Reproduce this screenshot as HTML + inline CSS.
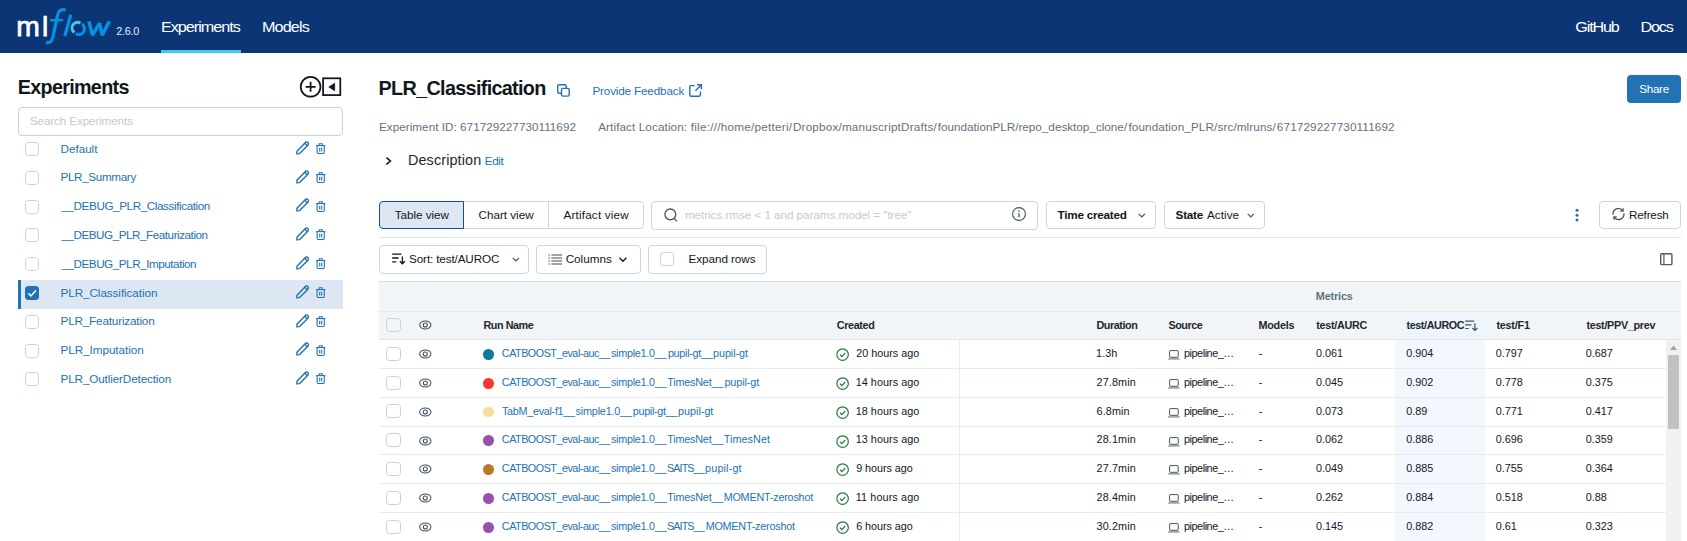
<!DOCTYPE html>
<html><head><meta charset="utf-8"><title>MLflow</title>
<style>
html,body{margin:0;padding:0;background:#fff;}
body{width:1687px;height:541px;overflow:hidden;position:relative;font-family:"Liberation Sans",sans-serif;}
.t{position:absolute;white-space:pre;line-height:1;}
.b{position:absolute;box-sizing:border-box;}
svg{position:absolute;overflow:visible;}
</style></head><body>
<header>
<div class="b" style="left:0.00px;top:0.00px;width:1687.00px;height:53.00px;background:#0b3574"></div>
<div class="b" style="left:161.00px;top:50.00px;width:80.20px;height:3.00px;background:#43c9ed"></div>
<span class="t" style="left:16.3px;top:11.65px;font-size:28.3px;color:#fff;letter-spacing:2.1px;-webkit-text-stroke:0.75px #fff">ml</span>
<svg style="left:0.00px;top:0.00px" width="160" height="53" viewBox="0 0 160 53"><g fill="none" stroke="#0194e2" stroke-width="3.25"><path d="M65.6 10.1 C61.2 8.6 58.6 10.6 57.6 15 L52.9 37 C52 41 50 43.6 46 42.4"/><path d="M50.3 20.2 L63.3 20.2" stroke-width="2.4"/><path d="M70.8 14.7 L64.8 36"/><path d="M89 21.3 L92.4 35.2 L99.6 23.4 L102.2 35.2 L109.4 21.3" stroke-linejoin="bevel" stroke-width="3.5"/><path d="M82 24 A5.3 5.5 0 0 1 75.8 33.6" stroke-width="3"/><path d="M74.4 32.4 A5.3 5.5 0 0 1 80.4 23.3" stroke="#43c9ed" stroke-width="3"/></g></svg>
<span class="t" style="left:116.19px;top:25.00px;font-size:10.8px;line-height:12px;letter-spacing:-0.240px;color:#e7f1fb">2.6.0</span>
<span class="t" style="left:161.00px;top:17.00px;font-size:16.2px;line-height:18px;letter-spacing:-1.022px;color:#ffffff;transform:scaleY(0.94);transform-origin:0 15px">Experiments</span>
<span class="t" style="left:262.02px;top:17.00px;font-size:16.2px;line-height:18px;letter-spacing:-0.891px;color:#ffffff;transform:scaleY(0.94);transform-origin:0 15px">Models</span>
<span class="t" style="left:1575.36px;top:17.00px;font-size:16.2px;line-height:18px;letter-spacing:-1.208px;color:#ffffff;transform:scaleY(0.94);transform-origin:0 15px">GitHub</span>
<span class="t" style="left:1640.59px;top:17.00px;font-size:16.2px;line-height:18px;letter-spacing:-1.244px;color:#ffffff;transform:scaleY(0.94);transform-origin:0 15px">Docs</span>
</header>
<aside>
<svg style="left:298.00px;top:74.00px" width="48" height="26" viewBox="0 0 48 26"><g fill="none" stroke="#11171c" stroke-width="1.75"><circle cx="12.6" cy="12.8" r="9.9"/><path d="M7.6 12.8 H17.6 M12.6 7.8 V17.8"/><rect x="25.1" y="4.3" width="17.2" height="16.8"/></g><path d="M30.6 12.9 L36.8 8.9 V16.9 Z" fill="#11171c" stroke="#11171c" stroke-width="0.4" stroke-linejoin="round"/></svg>
<div class="b" style="left:18.00px;top:107.00px;width:325.00px;height:29.00px;border:1px solid #c4d3e0;border-radius:4px"></div>
<div class="b" style="left:25.00px;top:142.00px;width:14.00px;height:14.00px;border:1px solid #c4d3e0;border-radius:3.5px;background:#fff"></div>
<svg style="left:295.80px;top:140.70px" width="14" height="14" viewBox="0 0 14 14"><g fill="none" stroke="#2272b4" stroke-width="1.45" stroke-linejoin="round"><path d="M1 10.2 L9.4 1.4 A1.9 1.9 0 0 1 12.1 4 L3.6 12.6 L0.9 12.9 Z"/><path d="M8.7 2.2 L11.3 4.8"/></g></svg>
<svg style="left:316.40px;top:142.90px" width="10" height="11" viewBox="0 0 10 11"><g fill="none" stroke="#2272b4" stroke-width="1.1"><path d="M0 2.6 H9.4"/><path d="M3.2 2.4 V0.8 H6.2 V2.4"/><path d="M1.1 2.8 V9.3 A1.2 1.2 0 0 0 2.3 10.5 H7.1 A1.2 1.2 0 0 0 8.3 9.3 V2.8"/><path d="M3.7 4.7 V8.4 M5.7 4.7 V8.4" stroke-width="1.1"/></g></svg>
<div class="b" style="left:25.00px;top:170.80px;width:14.00px;height:14.00px;border:1px solid #c4d3e0;border-radius:3.5px;background:#fff"></div>
<svg style="left:295.80px;top:169.50px" width="14" height="14" viewBox="0 0 14 14"><g fill="none" stroke="#2272b4" stroke-width="1.45" stroke-linejoin="round"><path d="M1 10.2 L9.4 1.4 A1.9 1.9 0 0 1 12.1 4 L3.6 12.6 L0.9 12.9 Z"/><path d="M8.7 2.2 L11.3 4.8"/></g></svg>
<svg style="left:316.40px;top:171.70px" width="10" height="11" viewBox="0 0 10 11"><g fill="none" stroke="#2272b4" stroke-width="1.1"><path d="M0 2.6 H9.4"/><path d="M3.2 2.4 V0.8 H6.2 V2.4"/><path d="M1.1 2.8 V9.3 A1.2 1.2 0 0 0 2.3 10.5 H7.1 A1.2 1.2 0 0 0 8.3 9.3 V2.8"/><path d="M3.7 4.7 V8.4 M5.7 4.7 V8.4" stroke-width="1.1"/></g></svg>
<div class="b" style="left:25.00px;top:199.60px;width:14.00px;height:14.00px;border:1px solid #c4d3e0;border-radius:3.5px;background:#fff"></div>
<svg style="left:295.80px;top:198.30px" width="14" height="14" viewBox="0 0 14 14"><g fill="none" stroke="#2272b4" stroke-width="1.45" stroke-linejoin="round"><path d="M1 10.2 L9.4 1.4 A1.9 1.9 0 0 1 12.1 4 L3.6 12.6 L0.9 12.9 Z"/><path d="M8.7 2.2 L11.3 4.8"/></g></svg>
<svg style="left:316.40px;top:200.50px" width="10" height="11" viewBox="0 0 10 11"><g fill="none" stroke="#2272b4" stroke-width="1.1"><path d="M0 2.6 H9.4"/><path d="M3.2 2.4 V0.8 H6.2 V2.4"/><path d="M1.1 2.8 V9.3 A1.2 1.2 0 0 0 2.3 10.5 H7.1 A1.2 1.2 0 0 0 8.3 9.3 V2.8"/><path d="M3.7 4.7 V8.4 M5.7 4.7 V8.4" stroke-width="1.1"/></g></svg>
<div class="b" style="left:25.00px;top:228.40px;width:14.00px;height:14.00px;border:1px solid #c4d3e0;border-radius:3.5px;background:#fff"></div>
<svg style="left:295.80px;top:227.10px" width="14" height="14" viewBox="0 0 14 14"><g fill="none" stroke="#2272b4" stroke-width="1.45" stroke-linejoin="round"><path d="M1 10.2 L9.4 1.4 A1.9 1.9 0 0 1 12.1 4 L3.6 12.6 L0.9 12.9 Z"/><path d="M8.7 2.2 L11.3 4.8"/></g></svg>
<svg style="left:316.40px;top:229.30px" width="10" height="11" viewBox="0 0 10 11"><g fill="none" stroke="#2272b4" stroke-width="1.1"><path d="M0 2.6 H9.4"/><path d="M3.2 2.4 V0.8 H6.2 V2.4"/><path d="M1.1 2.8 V9.3 A1.2 1.2 0 0 0 2.3 10.5 H7.1 A1.2 1.2 0 0 0 8.3 9.3 V2.8"/><path d="M3.7 4.7 V8.4 M5.7 4.7 V8.4" stroke-width="1.1"/></g></svg>
<div class="b" style="left:25.00px;top:257.20px;width:14.00px;height:14.00px;border:1px solid #c4d3e0;border-radius:3.5px;background:#fff"></div>
<svg style="left:295.80px;top:255.90px" width="14" height="14" viewBox="0 0 14 14"><g fill="none" stroke="#2272b4" stroke-width="1.45" stroke-linejoin="round"><path d="M1 10.2 L9.4 1.4 A1.9 1.9 0 0 1 12.1 4 L3.6 12.6 L0.9 12.9 Z"/><path d="M8.7 2.2 L11.3 4.8"/></g></svg>
<svg style="left:316.40px;top:258.10px" width="10" height="11" viewBox="0 0 10 11"><g fill="none" stroke="#2272b4" stroke-width="1.1"><path d="M0 2.6 H9.4"/><path d="M3.2 2.4 V0.8 H6.2 V2.4"/><path d="M1.1 2.8 V9.3 A1.2 1.2 0 0 0 2.3 10.5 H7.1 A1.2 1.2 0 0 0 8.3 9.3 V2.8"/><path d="M3.7 4.7 V8.4 M5.7 4.7 V8.4" stroke-width="1.1"/></g></svg>
<div class="b" style="left:18.00px;top:280.00px;width:325.00px;height:29.00px;background:#dce7f3;border-left:3px solid #2272b4"></div>
<div class="b" style="left:25.00px;top:285.80px;width:14.20px;height:14.20px;background:#2272b4;border-radius:3.5px"></div>
<svg style="left:25.00px;top:285.80px" width="14.2" height="14.2" viewBox="0 0 14.2 14.2"><path d="M3.4 7.4 L6 10 L10.9 4.6" fill="none" stroke="#fff" stroke-width="1.5"/></svg>
<svg style="left:295.80px;top:284.70px" width="14" height="14" viewBox="0 0 14 14"><g fill="none" stroke="#2272b4" stroke-width="1.45" stroke-linejoin="round"><path d="M1 10.2 L9.4 1.4 A1.9 1.9 0 0 1 12.1 4 L3.6 12.6 L0.9 12.9 Z"/><path d="M8.7 2.2 L11.3 4.8"/></g></svg>
<svg style="left:316.40px;top:286.90px" width="10" height="11" viewBox="0 0 10 11"><g fill="none" stroke="#2272b4" stroke-width="1.1"><path d="M0 2.6 H9.4"/><path d="M3.2 2.4 V0.8 H6.2 V2.4"/><path d="M1.1 2.8 V9.3 A1.2 1.2 0 0 0 2.3 10.5 H7.1 A1.2 1.2 0 0 0 8.3 9.3 V2.8"/><path d="M3.7 4.7 V8.4 M5.7 4.7 V8.4" stroke-width="1.1"/></g></svg>
<div class="b" style="left:25.00px;top:314.80px;width:14.00px;height:14.00px;border:1px solid #c4d3e0;border-radius:3.5px;background:#fff"></div>
<svg style="left:295.80px;top:313.50px" width="14" height="14" viewBox="0 0 14 14"><g fill="none" stroke="#2272b4" stroke-width="1.45" stroke-linejoin="round"><path d="M1 10.2 L9.4 1.4 A1.9 1.9 0 0 1 12.1 4 L3.6 12.6 L0.9 12.9 Z"/><path d="M8.7 2.2 L11.3 4.8"/></g></svg>
<svg style="left:316.40px;top:315.70px" width="10" height="11" viewBox="0 0 10 11"><g fill="none" stroke="#2272b4" stroke-width="1.1"><path d="M0 2.6 H9.4"/><path d="M3.2 2.4 V0.8 H6.2 V2.4"/><path d="M1.1 2.8 V9.3 A1.2 1.2 0 0 0 2.3 10.5 H7.1 A1.2 1.2 0 0 0 8.3 9.3 V2.8"/><path d="M3.7 4.7 V8.4 M5.7 4.7 V8.4" stroke-width="1.1"/></g></svg>
<div class="b" style="left:25.00px;top:343.60px;width:14.00px;height:14.00px;border:1px solid #c4d3e0;border-radius:3.5px;background:#fff"></div>
<svg style="left:295.80px;top:342.30px" width="14" height="14" viewBox="0 0 14 14"><g fill="none" stroke="#2272b4" stroke-width="1.45" stroke-linejoin="round"><path d="M1 10.2 L9.4 1.4 A1.9 1.9 0 0 1 12.1 4 L3.6 12.6 L0.9 12.9 Z"/><path d="M8.7 2.2 L11.3 4.8"/></g></svg>
<svg style="left:316.40px;top:344.50px" width="10" height="11" viewBox="0 0 10 11"><g fill="none" stroke="#2272b4" stroke-width="1.1"><path d="M0 2.6 H9.4"/><path d="M3.2 2.4 V0.8 H6.2 V2.4"/><path d="M1.1 2.8 V9.3 A1.2 1.2 0 0 0 2.3 10.5 H7.1 A1.2 1.2 0 0 0 8.3 9.3 V2.8"/><path d="M3.7 4.7 V8.4 M5.7 4.7 V8.4" stroke-width="1.1"/></g></svg>
<div class="b" style="left:25.00px;top:372.40px;width:14.00px;height:14.00px;border:1px solid #c4d3e0;border-radius:3.5px;background:#fff"></div>
<svg style="left:295.80px;top:371.10px" width="14" height="14" viewBox="0 0 14 14"><g fill="none" stroke="#2272b4" stroke-width="1.45" stroke-linejoin="round"><path d="M1 10.2 L9.4 1.4 A1.9 1.9 0 0 1 12.1 4 L3.6 12.6 L0.9 12.9 Z"/><path d="M8.7 2.2 L11.3 4.8"/></g></svg>
<svg style="left:316.40px;top:373.30px" width="10" height="11" viewBox="0 0 10 11"><g fill="none" stroke="#2272b4" stroke-width="1.1"><path d="M0 2.6 H9.4"/><path d="M3.2 2.4 V0.8 H6.2 V2.4"/><path d="M1.1 2.8 V9.3 A1.2 1.2 0 0 0 2.3 10.5 H7.1 A1.2 1.2 0 0 0 8.3 9.3 V2.8"/><path d="M3.7 4.7 V8.4 M5.7 4.7 V8.4" stroke-width="1.1"/></g></svg>
<span class="t" style="left:17.72px;top:76.00px;font-size:19.8px;line-height:22px;letter-spacing:-0.703px;color:#11171c;font-weight:700">Experiments</span>
<span class="t" style="left:29.90px;top:114.00px;font-size:11.7px;line-height:13px;letter-spacing:-0.129px;color:#c9c9c9">Search Experiments</span>
<span class="t" style="left:60.54px;top:142.00px;font-size:11.7px;line-height:13px;letter-spacing:-0.020px;color:#2272b4">Default</span>
<span class="t" style="left:60.54px;top:170.00px;font-size:11.7px;line-height:13px;letter-spacing:-0.353px;color:#2272b4">PLR_Summary</span>
<span class="t" style="left:61.41px;top:199.00px;font-size:11.7px;line-height:13px;letter-spacing:-0.408px;color:#2272b4">__DEBUG_PLR_Classification</span>
<span class="t" style="left:61.41px;top:228.00px;font-size:11.7px;line-height:13px;letter-spacing:-0.468px;color:#2272b4">__DEBUG_PLR_Featurization</span>
<span class="t" style="left:61.41px;top:257.00px;font-size:11.7px;line-height:13px;letter-spacing:-0.461px;color:#2272b4">__DEBUG_PLR_Imputation</span>
<span class="t" style="left:60.54px;top:286.00px;font-size:11.7px;line-height:13px;letter-spacing:-0.070px;color:#2272b4">PLR_Classification</span>
<span class="t" style="left:60.54px;top:314.00px;font-size:11.7px;line-height:13px;letter-spacing:-0.165px;color:#2272b4">PLR_Featurization</span>
<span class="t" style="left:60.54px;top:343.00px;font-size:11.7px;line-height:13px;letter-spacing:-0.053px;color:#2272b4">PLR_Imputation</span>
<span class="t" style="left:60.54px;top:372.00px;font-size:11.7px;line-height:13px;letter-spacing:-0.125px;color:#2272b4">PLR_OutlierDetection</span>
</aside>
<main>
<svg style="left:556.70px;top:83.70px" width="14" height="14" viewBox="0 0 14 14"><g fill="none" stroke="#2272b4" stroke-width="1.4"><rect x="0.7" y="0.7" width="8.5" height="8.5" rx="1.4"/><rect x="4.5" y="4.4" width="7.7" height="7.7" rx="1.4" fill="#fff"/></g></svg>
<svg style="left:688.70px;top:83.80px" width="14" height="14" viewBox="0 0 14 14"><g fill="none" stroke="#2272b4" stroke-width="1.4"><path d="M5.6 1.6 H2 A1.2 1.2 0 0 0 0.8 2.8 V11 A1.2 1.2 0 0 0 2 12.2 H10.2 A1.2 1.2 0 0 0 11.4 11 V7.4"/><path d="M8 0.8 H12.4 V5.2 M12.2 1 L6.4 6.8"/></g></svg>
<div class="b" style="left:1627.00px;top:75.00px;width:54.00px;height:28.00px;background:#2272b4;border-radius:4px"></div>
<svg style="left:384.00px;top:155.00px" width="10" height="12" viewBox="0 0 10 12"><path d="M2.4 2.7 L6.4 6 L2.4 9.3" fill="none" stroke="#11171c" stroke-width="1.6"/></svg>
<div class="b" style="left:463.00px;top:201.00px;width:85.90px;height:28.00px;border:1px solid #cdd6df;border-left:none"></div>
<div class="b" style="left:548.00px;top:201.00px;width:95.50px;height:28.00px;border:1px solid #cdd6df;border-left:1px solid #cdd6df;border-radius:0 4px 4px 0"></div>
<div class="b" style="left:379.20px;top:201.00px;width:85.00px;height:28.00px;border:1px solid #0e538b;background:#dce7f3;border-radius:4px 0 0 4px"></div>
<div class="b" style="left:651.00px;top:201.00px;width:386.60px;height:29.00px;border:1px solid #cdd6df;border-radius:4px"></div>
<svg style="left:663.00px;top:207.00px" width="16" height="16" viewBox="0 0 16 16"><g fill="none" stroke="#44535f" stroke-width="1.3"><circle cx="7.3" cy="7.4" r="5.4"/><path d="M11.2 11.4 L14 14.2"/></g></svg>
<svg style="left:1011.00px;top:205.50px" width="16" height="16" viewBox="0 0 16 16"><g fill="none" stroke="#44535f" stroke-width="1.1"><circle cx="8" cy="8" r="6.4"/><path d="M8 7.2 V11.2" stroke-width="1.3"/></g><circle cx="8" cy="5.1" r="0.8" fill="#44535f"/></svg>
<div class="b" style="left:1046.00px;top:201.00px;width:109.60px;height:28.00px;border:1px solid #cdd6df;border-radius:4px"></div>
<div class="b" style="left:1164.10px;top:201.00px;width:100.60px;height:28.00px;border:1px solid #cdd6df;border-radius:4px"></div>
<svg style="left:1137.80px;top:212.70px" width="8" height="6" viewBox="0 0 8 6"><path d="M0.7 0.9 L3.8 4 L6.9 0.9" fill="none" stroke="#44535f" stroke-width="1.2"/></svg>
<svg style="left:1246.60px;top:212.70px" width="8" height="6" viewBox="0 0 8 6"><path d="M0.7 0.9 L3.8 4 L6.9 0.9" fill="none" stroke="#44535f" stroke-width="1.2"/></svg>
<svg style="left:1574.00px;top:207.00px" width="6" height="16" viewBox="0 0 6 16"><g fill="#2272b4"><circle cx="3" cy="3.3" r="1.5"/><circle cx="3" cy="8.2" r="1.5"/><circle cx="3" cy="13.1" r="1.5"/></g></svg>
<div class="b" style="left:1599.00px;top:201.00px;width:81.90px;height:28.00px;border:1px solid #cdd6df;border-radius:4px"></div>
<svg style="left:1611.60px;top:208.20px" width="14" height="13" viewBox="0 0 14 13"><g fill="none" stroke="#44535f" stroke-width="1.3"><path d="M1.1 6.6 A5.3 5.3 0 0 1 10.6 2.7"/><path d="M11.9 5.4 A5.3 5.3 0 0 1 2.4 9.3"/><path d="M11.1 0.3 V3.1 H8.3"/><path d="M1.9 11.7 V8.9 H4.7"/></g></svg>
<div class="b" style="left:379.00px;top:236.50px;width:1302.00px;height:1.00px;background:#dce3e9"></div>
<div class="b" style="left:379.00px;top:245.00px;width:149.80px;height:29.00px;border:1px solid #cdd6df;border-radius:4px"></div>
<div class="b" style="left:536.30px;top:245.00px;width:104.40px;height:29.00px;border:1px solid #cdd6df;border-radius:4px"></div>
<div class="b" style="left:648.20px;top:245.00px;width:118.50px;height:29.00px;border:1px solid #cdd6df;border-radius:4px"></div>
<svg style="left:391.70px;top:253.30px" width="14" height="12" viewBox="0 0 14 12"><g fill="none" stroke="#11171c" stroke-width="1.3"><path d="M0.2 1.2 H9.4 M0.2 5 H6.6 M0.2 8.8 H4.2"/><path d="M10.4 3.6 V10.6 M7.9 8.3 L10.4 10.8 L12.9 8.3"/></g></svg>
<svg style="left:511.80px;top:257.40px" width="8" height="6" viewBox="0 0 8 6"><path d="M0.7 0.9 L3.8 4 L6.9 0.9" fill="none" stroke="#44535f" stroke-width="1.2"/></svg>
<svg style="left:547.60px;top:254.00px" width="15" height="11" viewBox="0 0 15 11"><g fill="none" stroke="#3f4f5c" stroke-width="1.1"><path d="M3.4 1 H14 M3.4 4 H14 M3.4 7 H14 M3.4 10 H14"/><path d="M0.4 1 H1.8 M0.4 4 H1.8 M0.4 7 H1.8 M0.4 10 H1.8"/></g></svg>
<svg style="left:618.80px;top:256.60px" width="8" height="6" viewBox="0 0 8 6"><path d="M0.5 0.8 L3.9 4.2 L7.3 0.8" fill="none" stroke="#11171c" stroke-width="1.35"/></svg>
<div class="b" style="left:660.00px;top:252.00px;width:14.00px;height:14.00px;border:1px solid #c4d3e0;border-radius:3.5px"></div>
<svg style="left:1660.30px;top:253.10px" width="14" height="13" viewBox="0 0 14 13"><g fill="none" stroke="#4c5c69" stroke-width="1.4"><rect x="0.7" y="0.7" width="11.2" height="10.9" rx="0.9"/><path d="M3.9 0.8 V11.6" stroke-width="1.2"/></g></svg>
<div class="b" style="left:379.00px;top:281.00px;width:1302.00px;height:59.00px;background:#f2f5f7;border-top:1px solid #d0dae4;border-bottom:1px solid #dfe6ec"></div>
<div class="b" style="left:379.00px;top:311.00px;width:1302.00px;height:1.00px;background:#e4e9ee"></div>
<div class="b" style="left:1395.30px;top:312.00px;width:89.70px;height:27.00px;background:#eef5fc"></div>
<div class="b" style="left:1395.30px;top:340.00px;width:89.70px;height:201.00px;background:#f2f8fd"></div>
<div class="b" style="left:1666.00px;top:340.00px;width:15.00px;height:201.00px;background:#f1f1f1"></div>
<div class="b" style="left:1668.40px;top:355.30px;width:10.60px;height:73.40px;background:#c1c1c1"></div>
<svg style="left:1666.00px;top:340.00px" width="15" height="15" viewBox="0 0 15 15"><path d="M7.5 5.4 L11 10 H4 Z" fill="#a3a3a3"/></svg>
<div class="b" style="left:959.00px;top:340.00px;width:1.00px;height:201.00px;background:#e6ecf1"></div>
<div class="b" style="left:379.00px;top:368.00px;width:1287.00px;height:1.00px;background:#e6ecf1"></div>
<div class="b" style="left:379.00px;top:397.00px;width:1287.00px;height:1.00px;background:#e6ecf1"></div>
<div class="b" style="left:379.00px;top:426.00px;width:1287.00px;height:1.00px;background:#e6ecf1"></div>
<div class="b" style="left:379.00px;top:454.00px;width:1287.00px;height:1.00px;background:#e6ecf1"></div>
<div class="b" style="left:379.00px;top:483.00px;width:1287.00px;height:1.00px;background:#e6ecf1"></div>
<div class="b" style="left:379.00px;top:512.00px;width:1287.00px;height:1.00px;background:#e6ecf1"></div>
<div class="b" style="left:386.40px;top:317.80px;width:14.20px;height:14.20px;border:1px solid #c4d3e0;border-radius:3.5px"></div>
<svg style="left:418.80px;top:320.30px" width="13" height="10" viewBox="0 0 13 10"><g fill="none" stroke="#44535f" stroke-width="1.1"><ellipse cx="6.3" cy="5" rx="5.65" ry="4.05"/><circle cx="6.3" cy="5" r="2.0"/></g></svg>
<svg style="left:1465.00px;top:319.60px" width="14" height="12" viewBox="0 0 14 12"><g fill="none" stroke="#44535f" stroke-width="1.2"><path d="M0.2 1.2 H9.2 M0.2 4.9 H6.4 M0.2 8.5 H3.8"/><path d="M9.9 3.2 V10.4 M7.4 8 L9.9 10.5 L12.4 8"/></g></svg>
<div class="b" style="left:386.40px;top:346.70px;width:14.20px;height:14.20px;border:1px solid #c4d3e0;border-radius:3.5px;background:#fff"></div>
<svg style="left:418.80px;top:349.20px" width="13" height="10" viewBox="0 0 13 10"><g fill="none" stroke="#44535f" stroke-width="1.1"><ellipse cx="6.3" cy="5" rx="5.65" ry="4.05"/><circle cx="6.3" cy="5" r="2.0"/></g></svg>
<div class="b" style="left:483.10px;top:349.00px;width:10.80px;height:10.80px;background:#0b7b9e;border-radius:50%"></div>
<svg style="left:835.70px;top:348.10px" width="14" height="14" viewBox="0 0 14 14"><g fill="none" stroke="#277c43" stroke-width="1.2"><circle cx="6.6" cy="6.6" r="5.75"/><path d="M4 6.8 L5.9 8.6 L9.2 5"/></g></svg>
<svg style="left:1168.00px;top:350.10px" width="12" height="10" viewBox="0 0 12 10"><g fill="none" stroke="#44535f" stroke-width="1"><rect x="1.6" y="0.6" width="8.6" height="6.7" rx="0.6"/><path d="M0.2 8.9 H11.6" stroke-width="1.3" stroke="#7d8a95"/></g></svg>
<div class="b" style="left:386.40px;top:375.50px;width:14.20px;height:14.20px;border:1px solid #c4d3e0;border-radius:3.5px;background:#fff"></div>
<svg style="left:418.80px;top:378.00px" width="13" height="10" viewBox="0 0 13 10"><g fill="none" stroke="#44535f" stroke-width="1.1"><ellipse cx="6.3" cy="5" rx="5.65" ry="4.05"/><circle cx="6.3" cy="5" r="2.0"/></g></svg>
<div class="b" style="left:483.10px;top:377.80px;width:10.80px;height:10.80px;background:#f8382c;border-radius:50%"></div>
<svg style="left:835.70px;top:376.90px" width="14" height="14" viewBox="0 0 14 14"><g fill="none" stroke="#277c43" stroke-width="1.2"><circle cx="6.6" cy="6.6" r="5.75"/><path d="M4 6.8 L5.9 8.6 L9.2 5"/></g></svg>
<svg style="left:1168.00px;top:378.90px" width="12" height="10" viewBox="0 0 12 10"><g fill="none" stroke="#44535f" stroke-width="1"><rect x="1.6" y="0.6" width="8.6" height="6.7" rx="0.6"/><path d="M0.2 8.9 H11.6" stroke-width="1.3" stroke="#7d8a95"/></g></svg>
<div class="b" style="left:386.40px;top:404.30px;width:14.20px;height:14.20px;border:1px solid #c4d3e0;border-radius:3.5px;background:#fff"></div>
<svg style="left:418.80px;top:406.80px" width="13" height="10" viewBox="0 0 13 10"><g fill="none" stroke="#44535f" stroke-width="1.1"><ellipse cx="6.3" cy="5" rx="5.65" ry="4.05"/><circle cx="6.3" cy="5" r="2.0"/></g></svg>
<div class="b" style="left:483.10px;top:406.60px;width:10.80px;height:10.80px;background:#fcdba0;border-radius:50%"></div>
<svg style="left:835.70px;top:405.70px" width="14" height="14" viewBox="0 0 14 14"><g fill="none" stroke="#277c43" stroke-width="1.2"><circle cx="6.6" cy="6.6" r="5.75"/><path d="M4 6.8 L5.9 8.6 L9.2 5"/></g></svg>
<svg style="left:1168.00px;top:407.70px" width="12" height="10" viewBox="0 0 12 10"><g fill="none" stroke="#44535f" stroke-width="1"><rect x="1.6" y="0.6" width="8.6" height="6.7" rx="0.6"/><path d="M0.2 8.9 H11.6" stroke-width="1.3" stroke="#7d8a95"/></g></svg>
<div class="b" style="left:386.40px;top:433.10px;width:14.20px;height:14.20px;border:1px solid #c4d3e0;border-radius:3.5px;background:#fff"></div>
<svg style="left:418.80px;top:435.60px" width="13" height="10" viewBox="0 0 13 10"><g fill="none" stroke="#44535f" stroke-width="1.1"><ellipse cx="6.3" cy="5" rx="5.65" ry="4.05"/><circle cx="6.3" cy="5" r="2.0"/></g></svg>
<div class="b" style="left:483.10px;top:435.40px;width:10.80px;height:10.80px;background:#9a4eae;border-radius:50%"></div>
<svg style="left:835.70px;top:434.50px" width="14" height="14" viewBox="0 0 14 14"><g fill="none" stroke="#277c43" stroke-width="1.2"><circle cx="6.6" cy="6.6" r="5.75"/><path d="M4 6.8 L5.9 8.6 L9.2 5"/></g></svg>
<svg style="left:1168.00px;top:436.50px" width="12" height="10" viewBox="0 0 12 10"><g fill="none" stroke="#44535f" stroke-width="1"><rect x="1.6" y="0.6" width="8.6" height="6.7" rx="0.6"/><path d="M0.2 8.9 H11.6" stroke-width="1.3" stroke="#7d8a95"/></g></svg>
<div class="b" style="left:386.40px;top:461.90px;width:14.20px;height:14.20px;border:1px solid #c4d3e0;border-radius:3.5px;background:#fff"></div>
<svg style="left:418.80px;top:464.40px" width="13" height="10" viewBox="0 0 13 10"><g fill="none" stroke="#44535f" stroke-width="1.1"><ellipse cx="6.3" cy="5" rx="5.65" ry="4.05"/><circle cx="6.3" cy="5" r="2.0"/></g></svg>
<div class="b" style="left:483.10px;top:464.20px;width:10.80px;height:10.80px;background:#b87a28;border-radius:50%"></div>
<svg style="left:835.70px;top:463.30px" width="14" height="14" viewBox="0 0 14 14"><g fill="none" stroke="#277c43" stroke-width="1.2"><circle cx="6.6" cy="6.6" r="5.75"/><path d="M4 6.8 L5.9 8.6 L9.2 5"/></g></svg>
<svg style="left:1168.00px;top:465.30px" width="12" height="10" viewBox="0 0 12 10"><g fill="none" stroke="#44535f" stroke-width="1"><rect x="1.6" y="0.6" width="8.6" height="6.7" rx="0.6"/><path d="M0.2 8.9 H11.6" stroke-width="1.3" stroke="#7d8a95"/></g></svg>
<div class="b" style="left:386.40px;top:490.70px;width:14.20px;height:14.20px;border:1px solid #c4d3e0;border-radius:3.5px;background:#fff"></div>
<svg style="left:418.80px;top:493.20px" width="13" height="10" viewBox="0 0 13 10"><g fill="none" stroke="#44535f" stroke-width="1.1"><ellipse cx="6.3" cy="5" rx="5.65" ry="4.05"/><circle cx="6.3" cy="5" r="2.0"/></g></svg>
<div class="b" style="left:483.10px;top:493.00px;width:10.80px;height:10.80px;background:#9a4eae;border-radius:50%"></div>
<svg style="left:835.70px;top:492.10px" width="14" height="14" viewBox="0 0 14 14"><g fill="none" stroke="#277c43" stroke-width="1.2"><circle cx="6.6" cy="6.6" r="5.75"/><path d="M4 6.8 L5.9 8.6 L9.2 5"/></g></svg>
<svg style="left:1168.00px;top:494.10px" width="12" height="10" viewBox="0 0 12 10"><g fill="none" stroke="#44535f" stroke-width="1"><rect x="1.6" y="0.6" width="8.6" height="6.7" rx="0.6"/><path d="M0.2 8.9 H11.6" stroke-width="1.3" stroke="#7d8a95"/></g></svg>
<div class="b" style="left:386.40px;top:519.50px;width:14.20px;height:14.20px;border:1px solid #c4d3e0;border-radius:3.5px;background:#fff"></div>
<svg style="left:418.80px;top:522.00px" width="13" height="10" viewBox="0 0 13 10"><g fill="none" stroke="#44535f" stroke-width="1.1"><ellipse cx="6.3" cy="5" rx="5.65" ry="4.05"/><circle cx="6.3" cy="5" r="2.0"/></g></svg>
<div class="b" style="left:483.10px;top:521.80px;width:10.80px;height:10.80px;background:#9a4eae;border-radius:50%"></div>
<svg style="left:835.70px;top:520.90px" width="14" height="14" viewBox="0 0 14 14"><g fill="none" stroke="#277c43" stroke-width="1.2"><circle cx="6.6" cy="6.6" r="5.75"/><path d="M4 6.8 L5.9 8.6 L9.2 5"/></g></svg>
<svg style="left:1168.00px;top:522.90px" width="12" height="10" viewBox="0 0 12 10"><g fill="none" stroke="#44535f" stroke-width="1"><rect x="1.6" y="0.6" width="8.6" height="6.7" rx="0.6"/><path d="M0.2 8.9 H11.6" stroke-width="1.3" stroke="#7d8a95"/></g></svg>
<span class="t" style="left:378.58px;top:77.00px;font-size:19.8px;line-height:22px;letter-spacing:-0.671px;color:#11171c;font-weight:700">PLR_Classification</span>
<span class="t" style="left:592.45px;top:84.00px;font-size:11.7px;line-height:13px;letter-spacing:-0.159px;color:#2272b4">Provide Feedback</span>
<span class="t" style="left:1639.17px;top:82.00px;font-size:11.7px;line-height:13px;letter-spacing:-0.286px;color:#ffffff">Share</span>
<span class="t" style="left:379.03px;top:120.00px;font-size:11.7px;line-height:13px;letter-spacing:0.035px;color:#5f7281">Experiment ID: 671729227730111692</span>
<span><span class="t" style="left:598.18px;top:120.00px;font-size:11.7px;line-height:13px;letter-spacing:0.107px;color:#5f7281">Artifact Location: </span><span class="t" style="left:690.73px;top:120.00px;font-size:11.7px;line-height:13px;letter-spacing:0.256px;color:#5f7281">file:///home/petteri/</span><span class="t" style="left:792.95px;top:120.00px;font-size:11.7px;line-height:13px;letter-spacing:0.197px;color:#5f7281">Dropbox/manuscriptDrafts/</span><span class="t" style="left:937.73px;top:120.00px;font-size:11.7px;line-height:13px;letter-spacing:0.010px;color:#5f7281">foundationPLR/repo_desktop_clone/</span><span class="t" style="left:1128.49px;top:120.00px;font-size:11.7px;line-height:13px;letter-spacing:0.125px;color:#5f7281">foundation_PLR/src/mlruns/</span><span class="t" style="left:1276.86px;top:120.00px;font-size:11.7px;line-height:13px;letter-spacing:0.144px;color:#5f7281">671729227730111692</span></span>
<span class="t" style="left:407.99px;top:152.00px;font-size:14.4px;line-height:16px;letter-spacing:0.118px;color:#1f272d">Description</span>
<span class="t" style="left:484.76px;top:154.00px;font-size:11.7px;line-height:13px;letter-spacing:-0.357px;color:#2272b4">Edit</span>
<span class="t" style="left:394.68px;top:208.00px;font-size:11.7px;line-height:13px;letter-spacing:-0.026px;color:#11171c">Table view</span>
<span class="t" style="left:478.56px;top:208.00px;font-size:11.7px;line-height:13px;letter-spacing:-0.017px;color:#11171c">Chart view</span>
<span class="t" style="left:563.55px;top:208.00px;font-size:11.7px;line-height:13px;letter-spacing:0.173px;color:#11171c">Artifact view</span>
<span class="t" style="left:684.88px;top:208.00px;font-size:11.7px;line-height:13px;letter-spacing:-0.046px;color:#c9c9c9">metrics.rmse &lt; 1 and params.model = &quot;tree&quot;</span>
<span class="t" style="left:1057.49px;top:208.00px;font-size:11.7px;line-height:13px;letter-spacing:-0.221px;color:#11171c;font-weight:700">Time created</span>
<span class="t" style="left:1175.62px;top:208.00px;font-size:11.7px;line-height:13px;letter-spacing:-0.265px;color:#11171c;font-weight:700">State</span>
<span class="t" style="left:1206.89px;top:208.00px;font-size:11.7px;line-height:13px;letter-spacing:0.075px;color:#11171c">Active</span>
<span class="t" style="left:1628.95px;top:208.00px;font-size:11.7px;line-height:13px;letter-spacing:-0.166px;color:#11171c">Refresh</span>
<span class="t" style="left:409.09px;top:252.00px;font-size:11.7px;line-height:13px;letter-spacing:-0.128px;color:#11171c">Sort: test/AUROC</span>
<span class="t" style="left:565.70px;top:252.00px;font-size:11.7px;line-height:13px;letter-spacing:-0.007px;color:#11171c">Columns</span>
<span class="t" style="left:688.62px;top:252.00px;font-size:11.7px;line-height:13px;letter-spacing:-0.070px;color:#11171c">Expand rows</span>
<span class="t" style="left:1315.87px;top:290.00px;font-size:10.8px;line-height:12px;letter-spacing:-0.135px;color:#5f7281;font-weight:700">Metrics</span>
<span class="t" style="left:483.45px;top:319.00px;font-size:10.8px;line-height:12px;letter-spacing:-0.443px;color:#1f272d;font-weight:700">Run Name</span>
<span class="t" style="left:836.68px;top:319.00px;font-size:10.8px;line-height:12px;letter-spacing:-0.332px;color:#1f272d;font-weight:700">Created</span>
<span class="t" style="left:1096.51px;top:319.00px;font-size:10.8px;line-height:12px;letter-spacing:-0.445px;color:#1f272d;font-weight:700">Duration</span>
<span class="t" style="left:1168.59px;top:319.00px;font-size:10.8px;line-height:12px;letter-spacing:-0.507px;color:#1f272d;font-weight:700">Source</span>
<span class="t" style="left:1258.51px;top:319.00px;font-size:10.8px;line-height:12px;letter-spacing:-0.252px;color:#1f272d;font-weight:700">Models</span>
<span class="t" style="left:1316.32px;top:319.00px;font-size:10.8px;line-height:12px;letter-spacing:-0.289px;color:#1f272d;font-weight:700">test/AURC</span>
<span class="t" style="left:1406.48px;top:319.00px;font-size:10.8px;line-height:12px;letter-spacing:-0.403px;color:#1f272d;font-weight:700">test/AUROC</span>
<span class="t" style="left:1496.39px;top:319.00px;font-size:10.8px;line-height:12px;letter-spacing:-0.209px;color:#1f272d;font-weight:700">test/F1</span>
<span class="t" style="left:1586.39px;top:319.00px;font-size:10.8px;line-height:12px;letter-spacing:-0.291px;color:#1f272d;font-weight:700">test/PPV_prev</span>
<span><span class="t" style="left:501.84px;top:347.00px;font-size:10.8px;line-height:12px;letter-spacing:-0.496px;color:#2272b4">CATBOOST_eval-auc__</span><span class="t" style="left:610.95px;top:347.00px;font-size:10.8px;line-height:12px;letter-spacing:-0.255px;color:#2272b4">simple1.0__</span><span class="t" style="left:667.91px;top:347.00px;font-size:10.8px;line-height:12px;letter-spacing:-0.294px;color:#2272b4">pupil-gt__</span><span class="t" style="left:713.08px;top:347.00px;font-size:10.8px;line-height:12px;letter-spacing:-0.074px;color:#2272b4">pupil-gt</span></span>
<span class="t" style="left:856.19px;top:347.00px;font-size:10.8px;line-height:12px;letter-spacing:0.006px;color:#11171c">20 hours ago</span>
<span class="t" style="left:1096.11px;top:347.00px;font-size:10.8px;line-height:12px;letter-spacing:0.035px;color:#11171c">1.3h</span>
<span class="t" style="left:1184.06px;top:347.00px;font-size:10.8px;line-height:12px;letter-spacing:-0.444px;color:#11171c">pipeline_…</span>
<span class="t" style="left:1258.67px;top:347.00px;font-size:10.8px;line-height:12px;letter-spacing:0.000px;color:#11171c">-</span>
<span class="t" style="left:1316.04px;top:347.00px;font-size:10.8px;line-height:12px;letter-spacing:0.000px;color:#11171c">0.061</span>
<span class="t" style="left:1406.22px;top:347.00px;font-size:10.8px;line-height:12px;letter-spacing:0.000px;color:#11171c">0.904</span>
<span class="t" style="left:1495.87px;top:347.00px;font-size:10.8px;line-height:12px;letter-spacing:0.000px;color:#11171c">0.797</span>
<span class="t" style="left:1585.87px;top:347.00px;font-size:10.8px;line-height:12px;letter-spacing:0.000px;color:#11171c">0.687</span>
<span><span class="t" style="left:501.84px;top:376.00px;font-size:10.8px;line-height:12px;letter-spacing:-0.496px;color:#2272b4">CATBOOST_eval-auc__</span><span class="t" style="left:610.95px;top:376.00px;font-size:10.8px;line-height:12px;letter-spacing:-0.255px;color:#2272b4">simple1.0__</span><span class="t" style="left:667.37px;top:376.00px;font-size:10.8px;line-height:12px;letter-spacing:-0.215px;color:#2272b4">TimesNet__</span><span class="t" style="left:724.41px;top:376.00px;font-size:10.8px;line-height:12px;letter-spacing:-0.090px;color:#2272b4">pupil-gt</span></span>
<span class="t" style="left:855.71px;top:376.00px;font-size:10.8px;line-height:12px;letter-spacing:0.049px;color:#11171c">14 hours ago</span>
<span class="t" style="left:1096.62px;top:376.00px;font-size:10.8px;line-height:12px;letter-spacing:0.116px;color:#11171c">27.8min</span>
<span class="t" style="left:1184.06px;top:376.00px;font-size:10.8px;line-height:12px;letter-spacing:-0.444px;color:#11171c">pipeline_…</span>
<span class="t" style="left:1258.67px;top:376.00px;font-size:10.8px;line-height:12px;letter-spacing:0.000px;color:#11171c">-</span>
<span class="t" style="left:1316.04px;top:376.00px;font-size:10.8px;line-height:12px;letter-spacing:0.000px;color:#11171c">0.045</span>
<span class="t" style="left:1406.22px;top:376.00px;font-size:10.8px;line-height:12px;letter-spacing:0.000px;color:#11171c">0.902</span>
<span class="t" style="left:1495.87px;top:376.00px;font-size:10.8px;line-height:12px;letter-spacing:0.000px;color:#11171c">0.778</span>
<span class="t" style="left:1585.87px;top:376.00px;font-size:10.8px;line-height:12px;letter-spacing:0.000px;color:#11171c">0.375</span>
<span><span class="t" style="left:501.95px;top:405.00px;font-size:10.8px;line-height:12px;letter-spacing:-0.286px;color:#2272b4">TabM_eval-f1__</span><span class="t" style="left:575.54px;top:405.00px;font-size:10.8px;line-height:12px;letter-spacing:-0.171px;color:#2272b4">simple1.0__</span><span class="t" style="left:632.76px;top:405.00px;font-size:10.8px;line-height:12px;letter-spacing:-0.307px;color:#2272b4">pupil-gt__</span><span class="t" style="left:678.06px;top:405.00px;font-size:10.8px;line-height:12px;letter-spacing:-0.013px;color:#2272b4">pupil-gt</span></span>
<span class="t" style="left:855.71px;top:405.00px;font-size:10.8px;line-height:12px;letter-spacing:0.049px;color:#11171c">18 hours ago</span>
<span class="t" style="left:1096.59px;top:405.00px;font-size:10.8px;line-height:12px;letter-spacing:0.129px;color:#11171c">6.8min</span>
<span class="t" style="left:1184.06px;top:405.00px;font-size:10.8px;line-height:12px;letter-spacing:-0.444px;color:#11171c">pipeline_…</span>
<span class="t" style="left:1258.67px;top:405.00px;font-size:10.8px;line-height:12px;letter-spacing:0.000px;color:#11171c">-</span>
<span class="t" style="left:1316.04px;top:405.00px;font-size:10.8px;line-height:12px;letter-spacing:0.000px;color:#11171c">0.073</span>
<span class="t" style="left:1406.22px;top:405.00px;font-size:10.8px;line-height:12px;letter-spacing:0.000px;color:#11171c">0.89</span>
<span class="t" style="left:1495.87px;top:405.00px;font-size:10.8px;line-height:12px;letter-spacing:0.000px;color:#11171c">0.771</span>
<span class="t" style="left:1585.87px;top:405.00px;font-size:10.8px;line-height:12px;letter-spacing:0.000px;color:#11171c">0.417</span>
<span><span class="t" style="left:501.84px;top:433.00px;font-size:10.8px;line-height:12px;letter-spacing:-0.496px;color:#2272b4">CATBOOST_eval-auc__</span><span class="t" style="left:610.95px;top:433.00px;font-size:10.8px;line-height:12px;letter-spacing:-0.255px;color:#2272b4">simple1.0__</span><span class="t" style="left:667.37px;top:433.00px;font-size:10.8px;line-height:12px;letter-spacing:-0.215px;color:#2272b4">TimesNet__</span><span class="t" style="left:723.74px;top:433.00px;font-size:10.8px;line-height:12px;letter-spacing:0.072px;color:#2272b4">TimesNet</span></span>
<span class="t" style="left:855.71px;top:433.00px;font-size:10.8px;line-height:12px;letter-spacing:0.049px;color:#11171c">13 hours ago</span>
<span class="t" style="left:1096.62px;top:433.00px;font-size:10.8px;line-height:12px;letter-spacing:0.116px;color:#11171c">28.1min</span>
<span class="t" style="left:1184.06px;top:433.00px;font-size:10.8px;line-height:12px;letter-spacing:-0.444px;color:#11171c">pipeline_…</span>
<span class="t" style="left:1258.67px;top:433.00px;font-size:10.8px;line-height:12px;letter-spacing:0.000px;color:#11171c">-</span>
<span class="t" style="left:1316.04px;top:433.00px;font-size:10.8px;line-height:12px;letter-spacing:0.000px;color:#11171c">0.062</span>
<span class="t" style="left:1406.22px;top:433.00px;font-size:10.8px;line-height:12px;letter-spacing:0.000px;color:#11171c">0.886</span>
<span class="t" style="left:1495.87px;top:433.00px;font-size:10.8px;line-height:12px;letter-spacing:0.000px;color:#11171c">0.696</span>
<span class="t" style="left:1585.87px;top:433.00px;font-size:10.8px;line-height:12px;letter-spacing:0.000px;color:#11171c">0.359</span>
<span><span class="t" style="left:501.84px;top:462.00px;font-size:10.8px;line-height:12px;letter-spacing:-0.496px;color:#2272b4">CATBOOST_eval-auc__</span><span class="t" style="left:610.95px;top:462.00px;font-size:10.8px;line-height:12px;letter-spacing:-0.255px;color:#2272b4">simple1.0__</span><span class="t" style="left:667.07px;top:462.00px;font-size:10.8px;line-height:12px;letter-spacing:-0.932px;color:#2272b4">SAITS__</span><span class="t" style="left:705.06px;top:462.00px;font-size:10.8px;line-height:12px;letter-spacing:0.161px;color:#2272b4">pupil-gt</span></span>
<span class="t" style="left:856.24px;top:462.00px;font-size:10.8px;line-height:12px;letter-spacing:-0.058px;color:#11171c">9 hours ago</span>
<span class="t" style="left:1096.62px;top:462.00px;font-size:10.8px;line-height:12px;letter-spacing:0.116px;color:#11171c">27.7min</span>
<span class="t" style="left:1184.06px;top:462.00px;font-size:10.8px;line-height:12px;letter-spacing:-0.444px;color:#11171c">pipeline_…</span>
<span class="t" style="left:1258.67px;top:462.00px;font-size:10.8px;line-height:12px;letter-spacing:0.000px;color:#11171c">-</span>
<span class="t" style="left:1316.04px;top:462.00px;font-size:10.8px;line-height:12px;letter-spacing:0.000px;color:#11171c">0.049</span>
<span class="t" style="left:1406.22px;top:462.00px;font-size:10.8px;line-height:12px;letter-spacing:0.000px;color:#11171c">0.885</span>
<span class="t" style="left:1495.87px;top:462.00px;font-size:10.8px;line-height:12px;letter-spacing:0.000px;color:#11171c">0.755</span>
<span class="t" style="left:1585.87px;top:462.00px;font-size:10.8px;line-height:12px;letter-spacing:0.000px;color:#11171c">0.364</span>
<span><span class="t" style="left:501.84px;top:491.00px;font-size:10.8px;line-height:12px;letter-spacing:-0.496px;color:#2272b4">CATBOOST_eval-auc__</span><span class="t" style="left:610.95px;top:491.00px;font-size:10.8px;line-height:12px;letter-spacing:-0.255px;color:#2272b4">simple1.0__</span><span class="t" style="left:667.37px;top:491.00px;font-size:10.8px;line-height:12px;letter-spacing:-0.215px;color:#2272b4">TimesNet__</span><span class="t" style="left:723.63px;top:491.00px;font-size:10.8px;line-height:12px;letter-spacing:-0.202px;color:#2272b4">MOMENT-zeroshot</span></span>
<span class="t" style="left:855.71px;top:491.00px;font-size:10.8px;line-height:12px;letter-spacing:0.121px;color:#11171c">11 hours ago</span>
<span class="t" style="left:1096.62px;top:491.00px;font-size:10.8px;line-height:12px;letter-spacing:0.116px;color:#11171c">28.4min</span>
<span class="t" style="left:1184.06px;top:491.00px;font-size:10.8px;line-height:12px;letter-spacing:-0.444px;color:#11171c">pipeline_…</span>
<span class="t" style="left:1258.67px;top:491.00px;font-size:10.8px;line-height:12px;letter-spacing:0.000px;color:#11171c">-</span>
<span class="t" style="left:1316.04px;top:491.00px;font-size:10.8px;line-height:12px;letter-spacing:0.000px;color:#11171c">0.262</span>
<span class="t" style="left:1406.22px;top:491.00px;font-size:10.8px;line-height:12px;letter-spacing:0.000px;color:#11171c">0.884</span>
<span class="t" style="left:1495.87px;top:491.00px;font-size:10.8px;line-height:12px;letter-spacing:0.000px;color:#11171c">0.518</span>
<span class="t" style="left:1585.87px;top:491.00px;font-size:10.8px;line-height:12px;letter-spacing:0.000px;color:#11171c">0.88</span>
<span><span class="t" style="left:501.84px;top:520.00px;font-size:10.8px;line-height:12px;letter-spacing:-0.496px;color:#2272b4">CATBOOST_eval-auc__</span><span class="t" style="left:610.95px;top:520.00px;font-size:10.8px;line-height:12px;letter-spacing:-0.255px;color:#2272b4">simple1.0__</span><span class="t" style="left:667.07px;top:520.00px;font-size:10.8px;line-height:12px;letter-spacing:-0.932px;color:#2272b4">SAITS__</span><span class="t" style="left:705.63px;top:520.00px;font-size:10.8px;line-height:12px;letter-spacing:-0.213px;color:#2272b4">MOMENT-zeroshot</span></span>
<span class="t" style="left:856.18px;top:520.00px;font-size:10.8px;line-height:12px;letter-spacing:-0.051px;color:#11171c">6 hours ago</span>
<span class="t" style="left:1096.59px;top:520.00px;font-size:10.8px;line-height:12px;letter-spacing:0.122px;color:#11171c">30.2min</span>
<span class="t" style="left:1184.06px;top:520.00px;font-size:10.8px;line-height:12px;letter-spacing:-0.444px;color:#11171c">pipeline_…</span>
<span class="t" style="left:1258.67px;top:520.00px;font-size:10.8px;line-height:12px;letter-spacing:0.000px;color:#11171c">-</span>
<span class="t" style="left:1316.04px;top:520.00px;font-size:10.8px;line-height:12px;letter-spacing:0.000px;color:#11171c">0.145</span>
<span class="t" style="left:1406.22px;top:520.00px;font-size:10.8px;line-height:12px;letter-spacing:0.000px;color:#11171c">0.882</span>
<span class="t" style="left:1495.87px;top:520.00px;font-size:10.8px;line-height:12px;letter-spacing:0.000px;color:#11171c">0.61</span>
<span class="t" style="left:1585.87px;top:520.00px;font-size:10.8px;line-height:12px;letter-spacing:0.000px;color:#11171c">0.323</span>
</main>
</body></html>
